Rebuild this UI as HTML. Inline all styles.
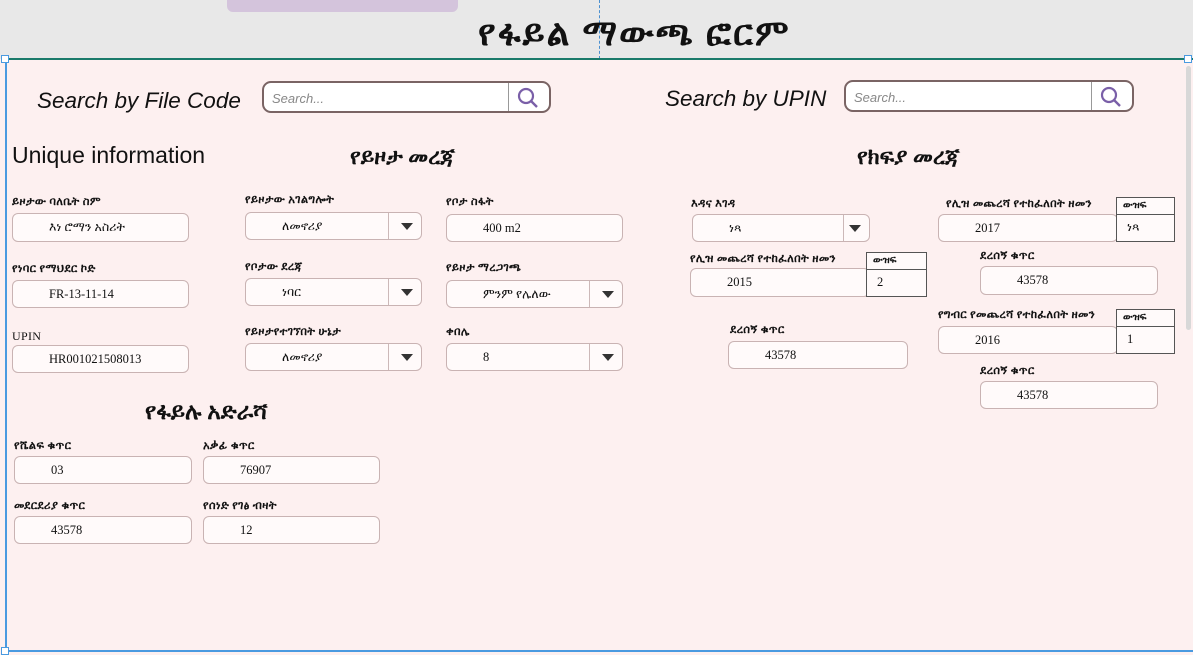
<!DOCTYPE html>
<html><head><meta charset="utf-8"><style>
*{margin:0;padding:0;box-sizing:border-box}
body{width:1193px;height:654px;overflow:hidden;position:relative;background:#fdf0f0;font-family:"Liberation Sans","DejaVu Sans",sans-serif;color:#111}
.a{position:absolute}
.top{left:0;top:0;width:1193px;height:59px;background:#e8e8e8}
.lbl{position:absolute;font-family:"Liberation Serif","DejaVu Serif",serif;font-size:11.5px;font-weight:bold;white-space:nowrap;letter-spacing:0.3px}
.box{position:absolute;background:#fffafa;border:1.5px solid #c9b3b3;border-radius:6px;font-family:"Liberation Serif",serif;font-size:12.5px;display:flex;align-items:center;padding-left:36px}
.dd:after{content:"";position:absolute;right:8px;top:50%;margin-top:-3px;border-left:6px solid transparent;border-right:6px solid transparent;border-top:7px solid #333}
.dv{position:absolute;top:0;bottom:0;width:1px;background:#ccb8b8}
.h{position:absolute;font-family:"Liberation Serif","DejaVu Serif",serif;font-weight:bold;font-size:22px;white-space:nowrap}
.tb{position:absolute;border:1px solid #555;background:#fffafa;font-family:"Liberation Serif",serif;font-size:12.5px}
.tb div{height:17px;border-bottom:1px solid #555;font-size:10px;font-weight:bold;padding-left:6px;line-height:16px}
.tb span{display:block;padding:5px 0 0 10px}
.sb{position:absolute;border:2px solid #7a6464;border-radius:9px;background:#fff;height:32px;font-size:13px;font-style:italic;color:#888;padding:8px 8px}
.sb i{position:absolute;right:40px;top:0;bottom:0;width:1px;background:#999}
.sb svg{position:absolute;right:9px;top:3px}
.si{position:absolute;font-size:22.5px;font-style:italic;white-space:nowrap}
</style></head><body>
<div class="a top"></div>
<div class="a" style="left:227px;top:0;width:231px;height:12px;background:#d4c4dc;border-radius:0 0 6px 6px"></div>
<div class="a" style="left:599px;top:0;width:0;height:59px;border-left:1px dashed #4a90d0"></div>
<div class="a" style="left:478px;top:12px;width:302px;text-align:center;font-family:'Liberation Serif',serif;font-weight:bold;font-size:36px;white-space:nowrap;letter-spacing:2px">የፋይል ማውጫ ፎርም</div>
<div class="a" style="left:5px;top:58px;width:1188px;height:2px;background:#1a7a6a"></div>
<div class="a" style="left:5px;top:60px;width:1.5px;height:592px;background:#4a9ae0"></div>
<div class="a" style="left:5px;top:650px;width:1188px;height:1.5px;background:#4a9ae0"></div>
<div class="a" style="left:1px;top:55px;width:8px;height:8px;border:1px solid #4a9ae0;background:#fff"></div>
<div class="a" style="left:1px;top:647px;width:8px;height:8px;border:1px solid #4a9ae0;background:#fff"></div>
<div class="a" style="left:1184px;top:55px;width:8px;height:8px;border:1px solid #4a9ae0;background:#fff"></div>
<div class="a" style="left:1186px;top:66px;width:5px;height:264px;background:#d8d8d8;border-radius:3px"></div>

<div class="si" style="left:37px;top:88px">Search by File Code</div>
<div class="sb" style="left:262px;top:81px;width:289px">Search...<i></i><svg width="24" height="24" viewBox="0 0 24 24"><circle cx="10" cy="10" r="7" fill="none" stroke="#7a5fa8" stroke-width="2.2"/><line x1="15" y1="15" x2="21" y2="21" stroke="#7a5fa8" stroke-width="2.4"/></svg></div>
<div class="si" style="left:665px;top:86px">Search by UPIN</div>
<div class="sb" style="left:844px;top:80px;width:290px">Search...<i></i><svg width="24" height="24" viewBox="0 0 24 24"><circle cx="10" cy="10" r="7" fill="none" stroke="#7a5fa8" stroke-width="2.2"/><line x1="15" y1="15" x2="21" y2="21" stroke="#7a5fa8" stroke-width="2.4"/></svg></div>

<div class="a" style="left:12px;top:142px;font-size:23px">Unique information</div>
<div class="h" style="left:350px;top:144px">የይዞታ መረጃ</div>
<div class="h" style="left:857px;top:144px">የክፍያ መረጃ</div>
<div class="h" style="left:145px;top:399px;font-size:23px">የፋይሉ አድራሻ</div>

<div class="lbl" style="left:12px;top:196px">ይዞታው ባለቤት ስም</div>
<div class="box" style="left:12px;top:213px;width:177px;height:29px">እነ ሮማን አስሪት</div>
<div class="lbl" style="left:12px;top:263px">የነባር የማህደር ኮድ</div>
<div class="box" style="left:12px;top:280px;width:177px;height:28px">FR-13-11-14</div>
<div class="lbl" style="left:12px;top:329px;font-weight:normal;font-size:12px">UPIN</div>
<div class="box" style="left:12px;top:345px;width:177px;height:28px">HR001021508013</div>

<div class="lbl" style="left:245px;top:194px">የይዞታው  አገልግሎት</div>
<div class="box dd" style="left:245px;top:212px;width:177px;height:28px">ለመኖሪያ<i class="dv" style="left:142px"></i></div>
<div class="lbl" style="left:245px;top:261px">የቦታው ደረጃ</div>
<div class="box dd" style="left:245px;top:278px;width:177px;height:28px">ነባር<i class="dv" style="left:142px"></i></div>
<div class="lbl" style="left:245px;top:326px">የይዞታየተገኘበት ሁኔታ</div>
<div class="box dd" style="left:245px;top:343px;width:177px;height:28px">ለመኖሪያ<i class="dv" style="left:142px"></i></div>

<div class="lbl" style="left:446px;top:196px">የቦታ ስፋት</div>
<div class="box" style="left:446px;top:214px;width:177px;height:28px">400 m2</div>
<div class="lbl" style="left:446px;top:262px">የይዞታ ማረጋገጫ</div>
<div class="box dd" style="left:446px;top:280px;width:177px;height:28px">ምንም የሌለው<i class="dv" style="left:142px"></i></div>
<div class="lbl" style="left:446px;top:326px">ቀበሌ</div>
<div class="box dd" style="left:446px;top:343px;width:177px;height:28px">8<i class="dv" style="left:142px"></i></div>

<div class="lbl" style="left:691px;top:198px">እዳና እገዳ</div>
<div class="box dd" style="left:692px;top:214px;width:178px;height:28px">ነጻ<i class="dv" style="left:150px"></i></div>
<div class="lbl" style="left:690px;top:253px">የሊዝ መጨረሻ የተከፈለበት ዘመን</div>
<div class="box" style="left:690px;top:268px;width:180px;height:29px">2015</div>
<div class="tb" style="left:866px;top:252px;width:61px;height:45px"><div>ውዝፍ</div><span>2</span></div>
<div class="lbl" style="left:730px;top:324px">ደረሰኝ ቁጥር</div>
<div class="box" style="left:728px;top:341px;width:180px;height:28px">43578</div>

<div class="lbl" style="left:946px;top:198px">የሊዝ መጨረሻ የተከፈለበት ዘመን</div>
<div class="box" style="left:938px;top:214px;width:180px;height:28px">2017</div>
<div class="tb" style="left:1116px;top:197px;width:59px;height:45px"><div>ውዝፍ</div><span>ነጻ</span></div>
<div class="lbl" style="left:980px;top:250px">ደረሰኝ ቁጥር</div>
<div class="box" style="left:980px;top:266px;width:178px;height:29px">43578</div>
<div class="lbl" style="left:938px;top:309px">የግብር የመጨረሻ የተከፈለበት ዘመን</div>
<div class="box" style="left:938px;top:326px;width:180px;height:28px">2016</div>
<div class="tb" style="left:1116px;top:309px;width:59px;height:45px"><div>ውዝፍ</div><span>1</span></div>
<div class="lbl" style="left:980px;top:365px">ደረሰኝ ቁጥር</div>
<div class="box" style="left:980px;top:381px;width:178px;height:28px">43578</div>

<div class="lbl" style="left:14px;top:440px">የሼልፍ ቁጥር</div>
<div class="box" style="left:14px;top:456px;width:178px;height:28px">03</div>
<div class="lbl" style="left:203px;top:440px">አቃፊ ቁጥር</div>
<div class="box" style="left:203px;top:456px;width:177px;height:28px">76907</div>
<div class="lbl" style="left:14px;top:500px">መደርደሪያ ቁጥር</div>
<div class="box" style="left:14px;top:516px;width:178px;height:28px">43578</div>
<div class="lbl" style="left:203px;top:500px">የሰነድ የገፅ ብዛት</div>
<div class="box" style="left:203px;top:516px;width:177px;height:28px">12</div>
</body></html>
